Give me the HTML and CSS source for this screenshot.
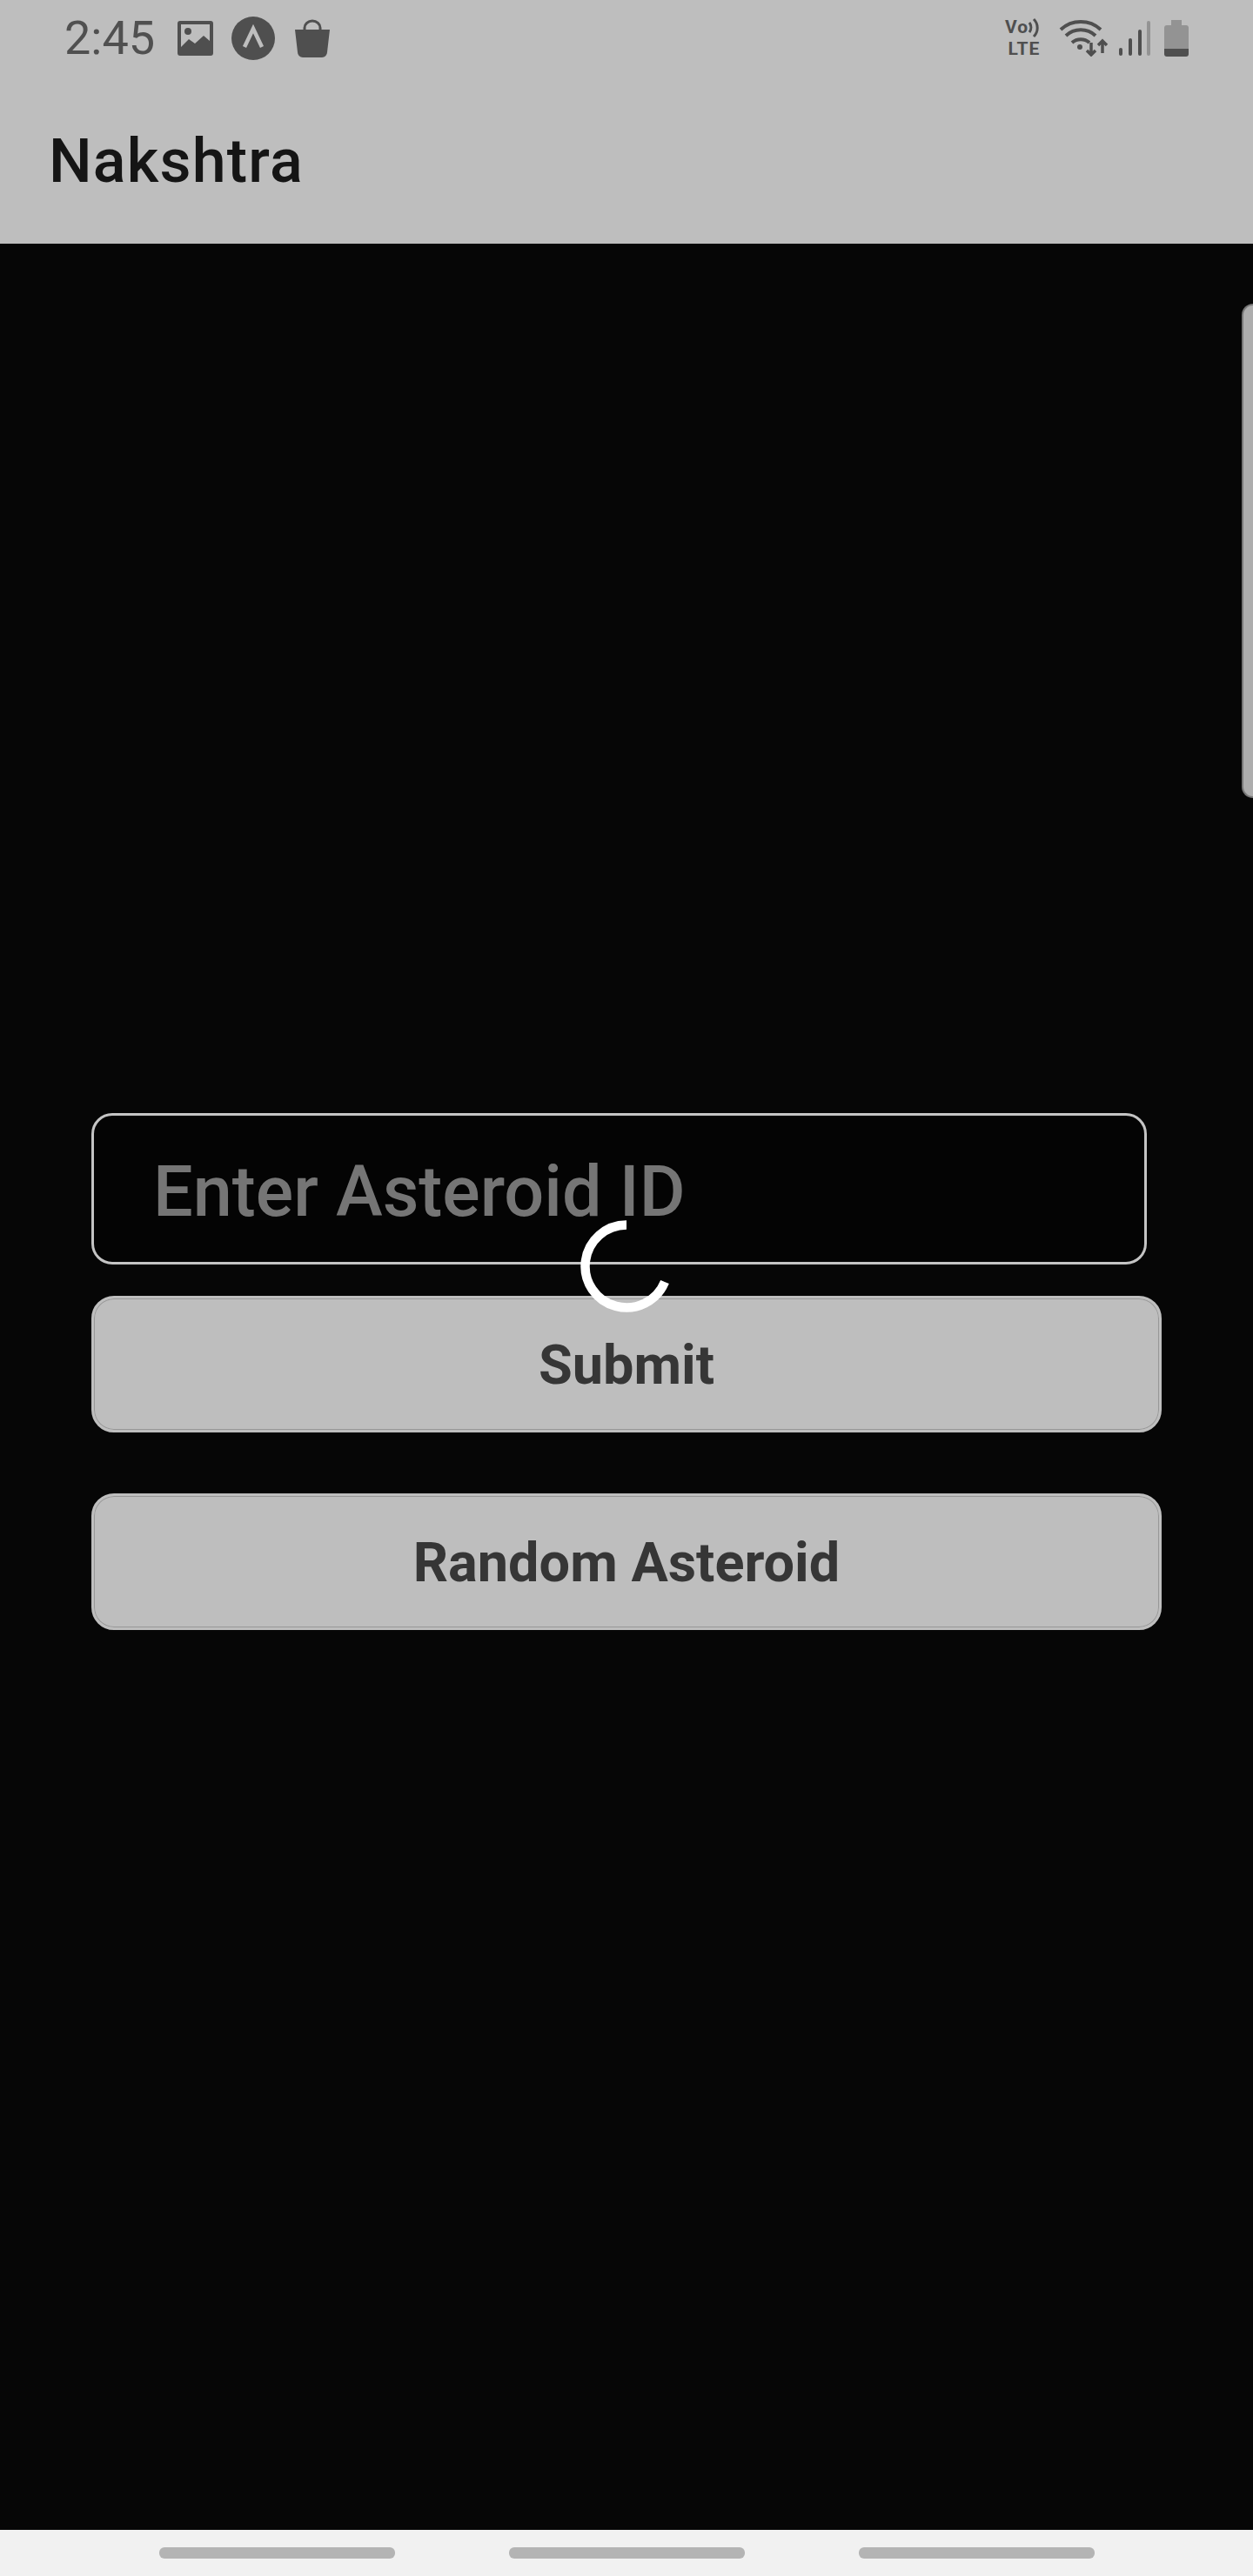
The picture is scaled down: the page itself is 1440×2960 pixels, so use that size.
FILE: index.html
```html
<!DOCTYPE html>
<html lang="en">
<head>
    <meta charset="UTF-8">
    <meta name="viewport" content="width=device-width, initial-scale=1.0">
    <title>Nakshtra</title>
    <link rel="stylesheet" href="styles.css">
</head>
<body>
<div class="screen">
    <header class="top">
        <div class="status-bar">
            <div class="status-left">
                <span class="time">2:45</span>
                <svg class="icon-image" viewBox="0 0 41 40">
                    <path fill="#4f4f4f" fill-rule="evenodd" d="M3 0h35a3 3 0 0 1 3 3v34a3 3 0 0 1-3 3H3a3 3 0 0 1-3-3V3a3 3 0 0 1 3-3zM4 4v26l9-9 7 5 10-9 7 6V4z"/>
                    <circle cx="12" cy="12" r="4" fill="#4f4f4f"/>
                </svg>
                <svg class="icon-circle" viewBox="0 0 50 50">
                    <circle cx="25" cy="25" r="25" fill="#4f4f4f"/>
                    <path d="M15 35l10-21 10 21" fill="none" stroke="#bebebe" stroke-width="4.500"/>
                </svg>
                <svg class="icon-bag" viewBox="0 0 40 44">
                    <path fill="none" stroke="#4f4f4f" stroke-width="3" d="M11 13v-3a9 8 0 0 1 18 0v3"/>
                    <path fill="#4f4f4f" d="M0 12h40l-3 26a6 6 0 0 1-6 6H9a6 6 0 0 1-6-6z"/>
                </svg>
            </div>
            <div class="status-right">
                <div class="volte">
                    <span class="vo">Vo<svg class="vo-waves" viewBox="0 0 12 24"><path d="M1 6a9 9 0 0 1 0 11M6 2a14 14 0 0 1 0 20" fill="none" stroke="#4f4f4f" stroke-width="3"/></svg></span>
                    <span class="lte">LTE</span>
                </div>
                <svg class="icon-wifi" viewBox="0 0 58 42">
                    <g fill="none" stroke="#4f4f4f" stroke-width="4">
                        <path d="M2 11a34 34 0 0 1 46 0"/>
                        <path d="M8 18a25 25 0 0 1 34 0"/>
                        <path d="M15 26a15 15 0 0 1 20 0"/>
                    </g>
                    <circle cx="24" cy="31" r="3" fill="#4f4f4f"/>
                    <path d="M37 26v14M32 35l5 5 5-5M50 38V24M45 29l5-5 5 5" fill="none" stroke="#4f4f4f" stroke-width="3.500"/>
                </svg>
                <svg class="icon-signal" viewBox="0 0 37 40">
                    <rect x="0" y="31" width="4" height="9" rx="2" fill="#4f4f4f"/>
                    <rect x="11" y="20" width="4" height="20" rx="2" fill="#4f4f4f"/>
                    <rect x="22" y="10" width="4" height="30" rx="2" fill="#4f4f4f"/>
                    <rect x="32" y="0" width="4" height="40" rx="2" fill="#939393"/>
                </svg>
                <svg class="icon-battery" viewBox="0 0 28 42">
                    <path fill="#939393" d="M8 0h12v6h5a3 3 0 0 1 3 3v24H0V9a3 3 0 0 1 3-3h5z"/>
                    <path fill="#4f4f4f" d="M0 33h28v6a3 3 0 0 1-3 3H3a3 3 0 0 1-3-3z"/>
                </svg>
            </div>
        </div>
        <h1 class="app-title">Nakshtra</h1>
    </header>

    <main class="content">
        <form class="asteroid-form">
            <input class="asteroid-input" type="text" placeholder="Enter Asteroid ID">
            <button class="action-btn submit-btn" type="button">Submit</button>
            <button class="action-btn" type="button">Random Asteroid</button>
        </form>
        <div class="scroll-handle"></div>
        <svg class="spinner" viewBox="0 0 106 106">
            <path d="M53 5.500A47.500 47.500 0 1 0 97 71" fill="none" stroke="#fff" stroke-width="10.500"/>
        </svg>
    </main>

    <footer class="bottom-nav">
        <span class="nav-pill"></span>
        <span class="nav-pill"></span>
        <span class="nav-pill"></span>
    </footer>
</div>
</body>
</html>
```
FILE: styles.css
```css
/* General page styling */
* {
    box-sizing: border-box;
}

body {
    margin: 0;
    padding: 0;
    font-family: 'Roboto', sans-serif;
    background-color: #060606;
}

.screen {
    display: flex;
    flex-direction: column;
    height: 2960px;
}

/* Status bar and app bar */
.top {
    height: 280px;
    background-color: #bebebe;
}

.status-bar {
    display: flex;
    justify-content: space-between;
    align-items: center;
    height: 88px;
    padding: 0 74px 0 74px;
}

.status-left,
.status-right {
    display: flex;
    align-items: center;
}

.time {
    font-size: 54px;
    line-height: 90px;
    color: #505050;
    margin-right: 26px;
}

.icon-image {
    width: 41px;
    height: 40px;
    margin-right: 21px;
}

.icon-circle {
    width: 50px;
    height: 50px;
    margin-right: 23px;
}

.icon-bag {
    width: 40px;
    height: 44px;
}

.volte {
    display: flex;
    flex-direction: column;
    width: 44px;
    margin-right: 18px;
    color: #4f4f4f;
    font-size: 21px;
    font-weight: 700;
    line-height: 25px;
    text-align: center;
}

.vo {
    display: flex;
    align-items: center;
    height: 25px;
    letter-spacing: 1px;
}

.lte {
    letter-spacing: 1px;
}

.vo-waves {
    width: 12px;
    height: 24px;
}

.icon-wifi {
    width: 58px;
    height: 42px;
    margin-right: 11px;
}

.icon-signal {
    width: 37px;
    height: 40px;
    margin-right: 15px;
}

.icon-battery {
    width: 28px;
    height: 42px;
}

.app-title {
    margin: 47px 0 0;
    padding-left: 56px;
    font-size: 70px;
    font-weight: 500;
    line-height: 100px;
    letter-spacing: 1.2px;
    color: #151515;
}

/* Main area */
.content {
    position: relative;
    flex: 1;
    padding: 999px 105px 0;
}

.asteroid-form {
    display: flex;
    flex-direction: column;
    align-items: flex-start;
}

.asteroid-input {
    width: 1213px;
    height: 174px;
    padding: 7px 68px 0;
    font-family: 'Roboto', sans-serif;
    font-size: 81px;
    font-weight: 500;
    color: #757575;
    background-color: #040404;
    border: 3px solid #c4c4c4;
    border-radius: 24px;
    outline: none;
}

.asteroid-input::placeholder {
    color: #757575;
    opacity: 1;
}

.action-btn {
    width: 1230px;
    height: 157px;
    padding-top: 3px;
    font-family: 'Roboto', sans-serif;
    font-size: 63px;
    font-weight: 700;
    color: #363636;
    background-color: #bebebe;
    border: 3px solid #bebebe;
    border-radius: 26px;
    box-shadow: inset 0 0 0 1px #979797;
}

.submit-btn {
    margin: 36px 0 70px;
}

.scroll-handle {
    position: absolute;
    top: 69px;
    right: 0;
    width: 13px;
    height: 568px;
    background-color: #adadad;
    border: 2px solid #777;
    border-right: none;
    border-radius: 14px 0 0 14px;
}

.spinner {
    position: absolute;
    top: 1122px;
    left: 667px;
    width: 106px;
    height: 106px;
}

/* Bottom navigation */
.bottom-nav {
    display: flex;
    justify-content: center;
    gap: 131px;
    height: 53px;
    padding-top: 20px;
    background-color: #f1f1f1;
}

.nav-pill {
    width: 271px;
    height: 13px;
    background-color: #b4b4b4;
    border-radius: 6px;
}
```
